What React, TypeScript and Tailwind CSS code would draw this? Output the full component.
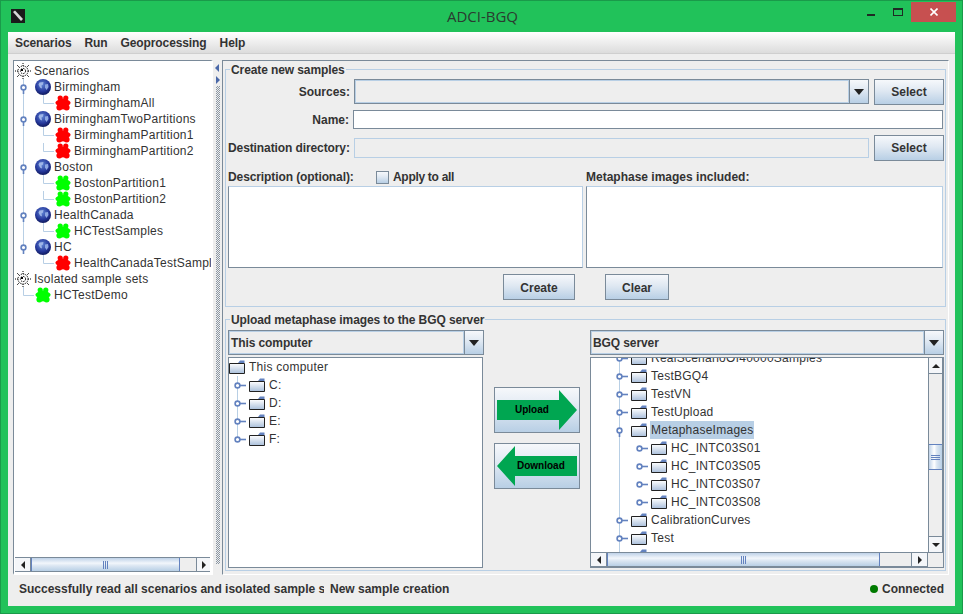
import type { ReactNode } from 'react';

const metal = 'bg-[linear-gradient(to_bottom,#f6f8fb,#dfe8f2_45%,#b8cfe5)]';
const thumbH = 'bg-[linear-gradient(to_bottom,#bfd2e8,#f2f6fb_40%,#dbe6f2_60%,#b8cfe5)]';
const thumbV = 'bg-[linear-gradient(to_right,#bfd2e8,#ffffff_40%,#dbe6f2_60%,#b8cfe5)]';

function Gear() {
  return (
    <svg width="16" height="16" viewBox="0 0 16 16" className="shrink-0">
      <g stroke="#000" strokeWidth="1" fill="none">
        <path d="M8 0V3M8 13V16M0 8H3M13 8H16" strokeDasharray="1 1" />
        <path d="M2 2L4 4M14 2L12 4M2 14L4 12M14 14L12 12" strokeDasharray="1 0.6" />
        <circle cx="8" cy="8" r="5" strokeDasharray="1.3 1" />
        <circle cx="8" cy="8" r="2.6" strokeDasharray="1.4 1" />
      </g>
      <rect x="6" y="6" width="2" height="2" fill="#000" />
    </svg>
  );
}

function Globe() {
  return (
    <svg width="16" height="16" viewBox="0 0 16 16" className="shrink-0">
      <defs>
        <radialGradient id="globe" cx="0.45" cy="0.35" r="0.7">
          <stop offset="0" stopColor="#5f84d4" />
          <stop offset="0.6" stopColor="#26399c" />
          <stop offset="1" stopColor="#0a1250" />
        </radialGradient>
      </defs>
      <circle cx="8" cy="8" r="8" fill="url(#globe)" />
      <path d="M4.5 3.5L8.5 3L8 5.5L6.5 6.5L7 9.5L5 8.5L3.5 5.5Z" fill="#9fb6e8" />
      <path d="M10 5.5L13 5L13.5 8L11.5 11L10 8.5Z" fill="#8ea8e2" />
    </svg>
  );
}

function Paw({ color }: { color: string }) {
  return (
    <svg width="16" height="16" viewBox="0 0 16 16" className="shrink-0" fill={color}>
      <circle cx="5.2" cy="3" r="2.6" />
      <circle cx="10.8" cy="3" r="2.6" />
      <ellipse cx="8" cy="7.8" rx="7.6" ry="3.6" />
      <ellipse cx="8" cy="9" rx="5.6" ry="5.4" />
      <circle cx="4.4" cy="12.6" r="3" />
      <circle cx="11.6" cy="12.6" r="3" />
    </svg>
  );
}

function Folder() {
  return (
    <svg width="16" height="16" viewBox="0 0 16 16" className="shrink-0">
      <defs>
        <linearGradient id="folder" x1="0" y1="0" x2="0" y2="1">
          <stop offset="0" stopColor="#ffffff" />
          <stop offset="1" stopColor="#a9bfdb" />
        </linearGradient>
      </defs>
      <path d="M0.5 4.5H15.5V14.5H0.5Z" fill="url(#folder)" stroke="#222" />
      <path d="M9 4L11 1.5H15.5V4Z" fill="#6382bf" />
    </svg>
  );
}

type Handle = { x: number; open?: boolean };

// one row's piece of the tree lines: pass-through verticals, an elbow, a knob
function Gutter({ w, h, pass = [], top = [], elbow, handle }: { w: number; h: number; pass?: number[]; top?: number[]; elbow?: number; handle?: Handle }) {
  const mid = h / 2;
  return (
    <svg width={w} height={h} className="shrink-0">
      {pass.map((x) => (
        <line key={x} x1={x + 0.5} x2={x + 0.5} y1={0} y2={h} stroke="#b8cfe5" />
      ))}
      {top.map((x) => (
        <line key={x} x1={x + 0.5} x2={x + 0.5} y1={0} y2={mid} stroke="#b8cfe5" />
      ))}
      {elbow !== undefined && <path d={`M${elbow + 0.5} 0V${mid + 0.5}H${elbow + 11}`} fill="none" stroke="#b8cfe5" />}
      {handle && (
        <g stroke="#6382bf" strokeWidth="1.6" fill="#fff">
          {handle.open ? (
            <line x1={handle.x + 0.5} x2={handle.x + 0.5} y1={mid} y2={mid + 7} />
          ) : (
            <line x1={handle.x + 0.5} x2={handle.x + 9} y1={mid + 0.5} y2={mid + 0.5} />
          )}
          <circle cx={handle.x + 0.5} cy={mid + 0.5} r="2.4" />
        </g>
      )}
    </svg>
  );
}

function Row({ h = 16, gutter, icon, label, selected, tight }: { h?: number; gutter?: ReactNode; icon: ReactNode; label: string; selected?: boolean; tight?: boolean }) {
  return (
    <div className="flex items-center whitespace-nowrap tracking-[0.25px]" style={{ height: h }}>
      {gutter}
      {icon}
      <span className={`px-[1px] leading-[18px] ${tight ? 'ml-[2px]' : 'ml-[3px]'} ${selected ? 'bg-[#b8cfe5]' : ''}`}>{label}</span>
    </div>
  );
}

function Arrow({ dir }: { dir: 'left' | 'right' | 'up' | 'down' }) {
  const d = { left: 'M1 4L5 0V8Z', right: 'M5 4L1 0V8Z', up: 'M0 5L4 1L8 5Z', down: 'M0 1H8L4 5Z' }[dir];
  const box = dir === 'left' || dir === 'right' ? { w: 6, h: 8 } : { w: 8, h: 6 };
  return (
    <svg width={box.w} height={box.h} viewBox={`0 0 ${box.w} ${box.h}`}>
      <path d={d} fill="#222" />
    </svg>
  );
}

function ArrowBtn({ dir, className }: { dir: 'left' | 'right' | 'up' | 'down'; className: string }) {
  return (
    <div className={`flex items-center justify-center shrink-0 bg-[#f4f6f9] border-[#7a8a99] ${className}`}>
      <Arrow dir={dir} />
    </div>
  );
}

function HScroll({ before, thumb, after }: { before: number; thumb: number; after: number }) {
  return (
    <div className="flex h-[15px] bg-[#eeeeee] border-y border-[#7a8a99]">
      <ArrowBtn dir="left" className="w-[16px] border-r" />
      <div className="shrink-0" style={{ width: before }} />
      <div className={`flex items-center justify-center shrink-0 border-x border-[#6382bf] ${thumbH}`} style={{ width: thumb }}>
        <div className="w-[5px] h-[8px] border-x border-[#6382bf] flex justify-center">
          <div className="w-[1px] h-full bg-[#6382bf]" />
        </div>
      </div>
      <div className="shrink-0" style={{ width: after }} />
      <ArrowBtn dir="right" className="flex-1 border-l" />
    </div>
  );
}

function Combo({ label, className }: { label?: string; className: string }) {
  return (
    <div className={`flex h-[25px] shrink-0 border border-[#7a8a99] ${className}`}>
      <div className="flex-1 flex items-center pl-[1px] bg-[#eeeeee] border border-[#b8cfe5] font-bold tracking-[-0.1px] whitespace-nowrap">{label}</div>
      <div className={`w-[19px] flex items-center justify-center border-l border-[#7a8a99] ${metal}`}>
        <svg width="10" height="6" viewBox="0 0 10 6">
          <path d="M0 0H10L5 6Z" fill="#222" />
        </svg>
      </div>
    </div>
  );
}

function Btn({ children, className }: { children: ReactNode; className: string }) {
  return (
    <div className={`flex items-center justify-center shrink-0 border border-[#7a8a99] font-bold ${metal} ${className}`}>{children}</div>
  );
}

function Group({ title, className, children }: { title: string; className: string; children: ReactNode }) {
  return (
    <div className={`relative border border-[#b8cfe5] ${className}`}>
      <span className="absolute left-[4px] top-[-8px] px-[1px] bg-[#eeeeee] font-bold tracking-[-0.1px] leading-[16px] whitespace-nowrap">{title}</span>
      {children}
    </div>
  );
}

const leftTree: { label: string; kind: 'root' | 'scen' | 'scenLast' | 'sample' | 'sampleLast' | 'solo'; red?: boolean }[] = [
  { label: 'Scenarios', kind: 'root' },
  { label: 'Birmingham', kind: 'scen' },
  { label: 'BirminghamAll', kind: 'sample', red: true },
  { label: 'BirminghamTwoPartitions', kind: 'scen' },
  { label: 'BirminghamPartition1', kind: 'sample', red: true },
  { label: 'BirminghamPartition2', kind: 'sample', red: true },
  { label: 'Boston', kind: 'scen' },
  { label: 'BostonPartition1', kind: 'sample' },
  { label: 'BostonPartition2', kind: 'sample' },
  { label: 'HealthCanada', kind: 'scen' },
  { label: 'HCTestSamples', kind: 'sample' },
  { label: 'HC', kind: 'scenLast' },
  { label: 'HealthCanadaTestSamples', kind: 'sampleLast', red: true },
  { label: 'Isolated sample sets', kind: 'root' },
  { label: 'HCTestDemo', kind: 'solo' },
];

function ScenarioTree() {
  return (
    <div className="pt-[2px] pl-[1px] overflow-hidden flex-1">
      {leftTree.map((r) => {
        const paw = <Paw color={r.red ? '#ff0000' : '#00ff00'} />;
        if (r.kind === 'root') return <Row tight key={r.label} icon={<Gear />} label={r.label} />;
        if (r.kind === 'scen') return <Row tight key={r.label} gutter={<Gutter w={20} h={16} pass={[8]} handle={{ x: 8, open: true }} />} icon={<Globe />} label={r.label} />;
        if (r.kind === 'scenLast') return <Row tight key={r.label} gutter={<Gutter w={20} h={16} top={[8]} handle={{ x: 8, open: true }} />} icon={<Globe />} label={r.label} />;
        if (r.kind === 'sample') return <Row tight key={r.label} gutter={<Gutter w={40} h={16} pass={[8]} elbow={28} />} icon={paw} label={r.label} />;
        if (r.kind === 'sampleLast') return <Row tight key={r.label} gutter={<Gutter w={40} h={16} elbow={28} />} icon={paw} label={r.label} />;
        return <Row tight key={r.label} gutter={<Gutter w={20} h={16} elbow={8} />} icon={paw} label={r.label} />;
      })}
    </div>
  );
}

function LocalTree() {
  return (
    <div className="w-[255px] h-[211px] mt-[2px] border border-[#7a8a99] bg-white overflow-hidden">
      <Row h={18} icon={<Folder />} label="This computer" />
      {['C:', 'D:', 'E:', 'F:'].map((d, i) => (
        <Row
          key={d}
          h={18}
          gutter={<Gutter w={20} h={18} pass={i < 3 ? [8] : []} top={i === 3 ? [8] : []} handle={{ x: 8 }} />}
          icon={<Folder />}
          label={d}
        />
      ))}
    </div>
  );
}

const serverRows: { label: string; child?: boolean; open?: boolean }[] = [
  { label: 'RealScenarioOf40000Samples' },
  { label: 'TestBGQ4' },
  { label: 'TestVN' },
  { label: 'TestUpload' },
  { label: 'MetaphaseImages', open: true },
  { label: 'HC_INTC03S01', child: true },
  { label: 'HC_INTC03S05', child: true },
  { label: 'HC_INTC03S07', child: true },
  { label: 'HC_INTC03S08', child: true },
  { label: 'CalibrationCurves' },
  { label: 'Test' },
];

function ServerTree() {
  return (
    <div className="w-[354px] h-[211px] mt-[2px] border border-[#7a8a99] bg-white flex flex-col overflow-hidden">
      <div className="flex flex-1 min-h-0">
        <div className="flex-1 overflow-hidden">
          <div className="-mt-[9px]">
            {serverRows.map((r) => (
              <Row
                key={r.label}
                h={18}
                gutter={
                  r.child ? (
                    <Gutter w={60} h={18} pass={[28]} handle={{ x: 48 }} />
                  ) : (
                    <Gutter w={40} h={18} pass={[28]} handle={{ x: 28, open: r.open }} />
                  )
                }
                icon={<Folder />}
                label={r.label}
                selected={r.open}
              />
            ))}
            <Row h={18} gutter={<Gutter w={40} h={18} pass={[28]} handle={{ x: 28 }} />} icon={<Folder />} label="" />
          </div>
        </div>
        <div className="w-[15px] flex flex-col bg-[#eeeeee] border-x border-[#7a8a99]">
          <ArrowBtn dir="up" className="h-[16px] border-b" />
          <div className="h-[70px]" />
          <div className={`h-[26px] flex flex-col gap-[1px] items-center justify-center border-y border-[#6382bf] ${thumbV}`}>
            <div className="w-[9px] h-[1px] bg-[#6382bf]" />
            <div className="w-[9px] h-[1px] bg-[#6382bf]" />
            <div className="w-[9px] h-[1px] bg-[#6382bf]" />
          </div>
          <div className="flex-1" />
          <ArrowBtn dir="down" className="h-[16px] border-t" />
        </div>
      </div>
      <div className="flex">
        <div className="flex-1 min-w-0">
          <HScroll before={0} thumb={273} after={31} />
        </div>
        <div className="w-[16px] h-[15px] bg-[#eeeeee] border-t border-l border-[#7a8a99]" />
      </div>
    </div>
  );
}

export default function App() {
  return (
    <div className="w-[963px] h-[614px] flex flex-col border border-[#1a9a4a] bg-[#21c25a] text-[12px] text-[#333333] font-['Liberation_Sans',Arial,sans-serif]">
      {/* title bar */}
      <div className="h-[31px] shrink-0 grid grid-cols-[1fr_auto_1fr]">
        <div className="pl-[10px] pt-[8px]">
          <svg width="14" height="14" viewBox="0 0 14 14">
            <rect width="14" height="14" fill="#1a1a1a" />
            <path d="M2 3L4 1.5L12 10L10 12Z" fill="#d8d8d8" />
          </svg>
        </div>
        <div className="pl-[2px] pt-[5px] text-[15px] leading-[20px] text-[#2b3a30] font-['Open_Sans',sans-serif]">ADCI-BGQ</div>
        <div className="flex justify-end items-start pr-[6px]">
          <div className="w-[8px] h-[2px] mt-[13px] bg-[#1f2a24]" />
          <div className="w-[10px] h-[8px] mt-[7px] ml-[18px] border border-t-2 border-[#1f2a24]" />
          <div className="w-[45px] h-[20px] mt-[1px] ml-[8px] flex items-center justify-center bg-[#c75050]">
            <svg width="8" height="8" viewBox="0 0 8 8">
              <path d="M0.5 0.5L7.5 7.5M7.5 0.5L0.5 7.5" stroke="#fff" strokeWidth="1.6" />
            </svg>
          </div>
        </div>
      </div>

      {/* client area */}
      <div className="w-[947px] ml-[7px] h-[574px] flex flex-col bg-[#eeeeee]">
        <div className="h-[22px] shrink-0 flex items-center gap-[13px] pl-[7px] font-bold tracking-[-0.1px] border-b border-[#cfcfcf] bg-[linear-gradient(to_bottom,#ffffff,#dcdcdc)]">
          <span>Scenarios</span>
          <span>Run</span>
          <span>Geoprocessing</span>
          <span>Help</span>
        </div>

        <div className="flex flex-1 min-h-0 pt-[6px] pl-[5px]">
          {/* scenario tree */}
          <div className="w-[200px] h-[515px] flex flex-col bg-white border border-[#7a8a99] border-r-2 border-b-2 border-b-[#ffffff] border-r-[#ffffff]">
            <ScenarioTree />
            <div className="mx-[1px] mb-[1px]">
              <HScroll before={0} thumb={149} after={16} />
            </div>
          </div>

          {/* divider */}
          <div className="w-[9px] flex flex-col items-center pt-[3px]">
            <svg width="5" height="22" viewBox="0 0 5 22">
              <path d="M4 1L0 5L4 9Z" fill="#4a68a8" />
              <path d="M1 13L5 17L1 21Z" fill="#4a68a8" />
            </svg>
            <div className="w-[4px] h-[478px] mt-[1px] bg-[conic-gradient(#8a96a3_25%,transparent_0_50%,#8a96a3_0_75%,transparent_0)] bg-[length:2px_2px]" />
          </div>

          {/* right side */}
          <div className="w-[727px] h-[515px] flex flex-col gap-[12px] pt-[8px] px-[2px] border border-[#7a8a99] border-r-white border-b-white">
            <Group title="Create new samples" className="h-[238px] px-[2px] pt-[9px] flex flex-col shrink-0">
              <div className="flex h-[26px]">
                <div className="w-[122px] shrink-0 leading-[26px] text-right font-bold">Sources:</div>
                <Combo className="w-[515px] ml-[4px]" />
                <Btn className="w-[70px] h-[26px] ml-[5px]">Select</Btn>
              </div>
              <div className="flex mt-[5px] h-[19px]">
                <div className="w-[121px] shrink-0 leading-[20px] text-right font-bold">Name:</div>
                <div className="flex-1 ml-[4px] bg-white border border-[#7a8a99]" />
              </div>
              <div className="flex mt-[6px] h-[26px]">
                <div className="w-[122px] shrink-0 leading-[26px] font-bold tracking-[-0.1px] whitespace-nowrap">Destination directory:</div>
                <div className="w-[515px] shrink-0 h-[20px] mt-[3px] ml-[4px] border border-[#b8cfe5] bg-[#eeeeee]" />
                <Btn className="w-[70px] h-[26px] ml-[5px]">Select</Btn>
              </div>
              <div className="flex mt-[8px] h-[16px] items-center font-bold">
                <div className="w-[148px] tracking-[-0.1px]">Description (optional):</div>
                <div className={`w-[13px] h-[13px] border border-[#7a8a99] ${metal}`} />
                <div className="w-[193px] ml-[4px] tracking-[-0.3px]">Apply to all</div>
                <div>Metaphase images included:</div>
              </div>
              <div className="flex gap-[3px] mt-[1px] h-[82px]">
                <div className="w-[355px] bg-white border border-[#7a8a99] border-t-[#b8cfe5] border-r-[#b8cfe5]" />
                <div className="flex-1 bg-white border border-[#7a8a99] border-t-[#b8cfe5] border-r-[#b8cfe5]" />
              </div>
              <div className="flex mt-[6px] pl-[275px] gap-[30px]">
                <Btn className="w-[72px] h-[26px] pt-[1px]">Create</Btn>
                <Btn className="w-[64px] h-[26px] pt-[1px]">Clear</Btn>
              </div>
            </Group>

            <Group title="Upload metaphase images to the BGQ server" className="h-[252px] pl-[2px] pr-[1px] pt-[10px] flex shrink-0">
              <div className="w-[256px] shrink-0">
                <Combo label="This computer" className="w-[256px]" />
                <LocalTree />
              </div>
              <div className="w-[106px] shrink-0 flex flex-col items-center gap-[10px] pt-[57px]">
                <Btn className="relative w-[86px] h-[46px] text-[10px] text-black">
                  <svg width="84" height="44" viewBox="0 0 84 44">
                    <path d="M2 12H64V2L82 22L64 42V32H2Z" fill="#00a651" />
                  </svg>
                  <span className="absolute left-[20px] top-[15px] leading-[14px]">Upload</span>
                </Btn>
                <Btn className="relative w-[86px] h-[46px] text-[10px] text-black">
                  <svg width="84" height="44" viewBox="0 0 84 44">
                    <path d="M82 12H20V2L2 22L20 42V32H82Z" fill="#00a651" />
                  </svg>
                  <span className="absolute left-[22px] top-[15px] leading-[14px]">Download</span>
                </Btn>
              </div>
              <div className="w-[354px] shrink-0">
                <Combo label="BGQ server" className="w-[354px]" />
                <ServerTree />
              </div>
            </Group>
          </div>
        </div>

        {/* status bar */}
        <div className="h-[31px] shrink-0 flex items-center pl-[11px] pr-[11px] pb-[3px] font-bold">
          <div className="w-[305px] overflow-hidden whitespace-nowrap">Successfully read all scenarios and isolated sample sets</div>
          <div className="ml-[6px]">New sample creation</div>
          <div className="ml-auto flex items-center gap-[4px]">
            <span className="w-[8px] h-[8px] rounded-full bg-[#007a00]" />
            Connected
          </div>
        </div>
      </div>
    </div>
  );
}
